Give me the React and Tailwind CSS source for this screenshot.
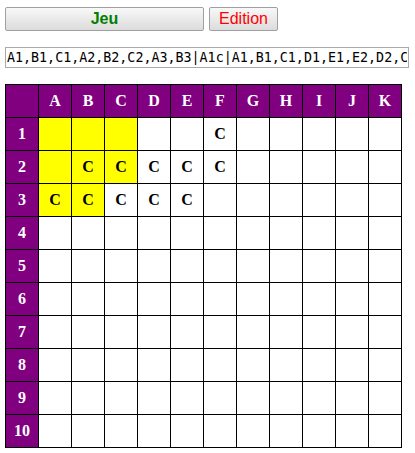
import React from 'react';

const cols = ['A', 'B', 'C', 'D', 'E', 'F', 'G', 'H', 'I', 'J', 'K'];
const rows = [1, 2, 3, 4, 5, 6, 7, 8, 9, 10];

const yellow = ['A1', 'B1', 'C1', 'A2', 'B2', 'C2', 'A3', 'B3'];
const marks = ['F1', 'B2', 'C2', 'D2', 'E2', 'F2', 'A3', 'B3', 'C3', 'D3', 'E3'];

export default function App() {
  const code = 'A1,B1,C1,A2,B2,C2,A3,B3|A1c|A1,B1,C1,D1,E1,E2,D2,C2,F2,F1,C3,D3,E3';

  return (
    <div className="bg-white w-[415px] h-[453px] overflow-hidden pl-[5px] pt-[7px]">
      <div className="flex gap-[5px]">
        <button
          type="button"
          className="w-[199px] h-[24px] border border-[#a0a0a0] rounded-[2px] bg-gradient-to-b from-[#f8f8f8] to-[#dcdcdc] text-[#008000] font-bold text-[16px] leading-none font-['Liberation_Sans',Arial,sans-serif]"
        >
          Jeu
        </button>
        <button
          type="button"
          className="w-[69px] h-[24px] border border-[#a0a0a0] rounded-[2px] bg-gradient-to-b from-[#f8f8f8] to-[#dcdcdc] text-[#ff0000] text-[16px] leading-none font-['Liberation_Sans',Arial,sans-serif]"
        >
          Edition
        </button>
      </div>

      <input
        type="text"
        readOnly
        value={code}
        className="mt-[16px] block w-[404px] h-[21px] border border-[#a9a9a9] px-[1px] text-[13.333px] text-black font-['DejaVu_Sans_Mono',monospace] outline-none"
      />

      <table className="mt-[16px] border-collapse table-fixed font-['Liberation_Serif','Times_New_Roman',serif] font-bold text-[16px]">
        <thead>
          <tr>
            <th className="w-[33px] h-[33px] border border-black bg-[#800080]"></th>
            {cols.map((c) => (
              <th key={c} className="w-[33px] h-[33px] border border-black bg-[#800080] text-white text-center">
                {c}
              </th>
            ))}
          </tr>
        </thead>
        <tbody>
          {rows.map((r) => (
            <tr key={r}>
              <th className="w-[33px] h-[33px] border border-black bg-[#800080] text-white text-center">{r}</th>
              {cols.map((c) => {
                const id = c + r;
                return (
                  <td
                    key={id}
                    className={`w-[33px] h-[33px] border border-black text-center text-black ${yellow.includes(id) ? 'bg-[#ffff00]' : 'bg-white'}`}
                  >
                    {marks.includes(id) ? 'C' : ''}
                  </td>
                );
              })}
            </tr>
          ))}
        </tbody>
      </table>
    </div>
  );
}
